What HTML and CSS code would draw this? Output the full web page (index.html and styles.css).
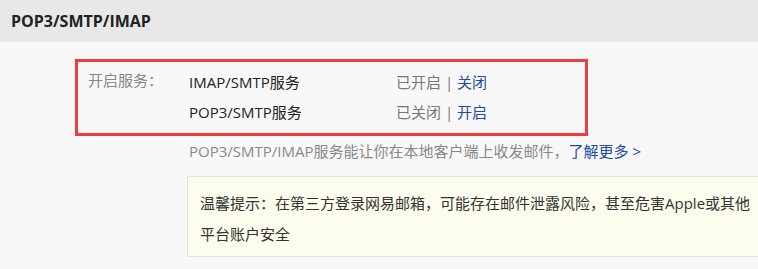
FILE: index.html
```html
<!DOCTYPE html>
<html lang="zh-CN">
<head>
  <meta charset="UTF-8">
  <title>POP3/SMTP/IMAP</title>
  <link rel="stylesheet" href="styles.css">
</head>
<body>

  <!-- Section title -->
  <header class="title-bar">POP3/SMTP/IMAP</header>

  <main class="content">
    <!-- Service switches -->
    <div class="service-box">
      <div class="service-label">开启服务：</div>
      <ul class="service-list">
        <li class="service-row">
          <span class="service-name">IMAP/SMTP服务</span>
          <span class="service-state">已开启 | <a href="#" class="link">关闭</a></span>
        </li>
        <li class="service-row">
          <span class="service-name">POP3/SMTP服务</span>
          <span class="service-state">已关闭 | <a href="#" class="link">开启</a></span>
        </li>
      </ul>
    </div>

    <p class="service-desc">POP3/SMTP/IMAP服务能让你在本地客户端上收发邮件，<a href="#" class="link">了解更多 &gt;</a></p>

    <!-- Warning -->
    <div class="notice">
      温馨提示：在第三方登录网易邮箱，可能存在邮件泄露风险，甚至危害Apple或其他平台账户安全
    </div>
  </main>

</body>
</html>
```

FILE: styles.css
```css
/* Base */
* {
  margin: 0;
  padding: 0;
  box-sizing: border-box;
}

body {
  font-family: "Open Sans", "Noto Sans CJK SC", sans-serif;
  font-size: 15px;
  color: #333;
  background-color: #f8f8f8;
  overflow: hidden;
}

a {
  text-decoration: none;
}

.link {
  color: #1d4ba5;
}

/* Title bar */
.title-bar {
  height: 42px;
  line-height: 42px;
  padding-left: 11px;
  background-color: #e8e8e8;
  font-size: 16px;
  font-weight: 700;
  color: #222;
}

/* Content */
.content {
  padding: 17px 0 0 75px;
}

.service-box {
  display: flex;
  width: 513px;
  padding: 5px 0 6px 10px;
  border: 3px solid #f23c40;
}

.service-label {
  width: 101px;
  line-height: 30px;
  margin-top: -2px;
  color: #888;
}

.service-list {
  list-style: none;
}

.service-row {
  display: flex;
  line-height: 30px;
}

.service-name {
  width: 207px;
  color: #222;
}

.service-state {
  color: #777;
}

.service-desc {
  margin: 4px 0 0 114px;
  line-height: 22px;
  color: #888;
}

/* Notice */
.notice {
  width: 600px;
  margin: 14px 0 0 112px;
  padding: 11px 24px 6px 12px;
  line-height: 31px;
  background-color: #fdfdee;
  border: 1px solid #e6e6cc;
  color: #333;
}
```
